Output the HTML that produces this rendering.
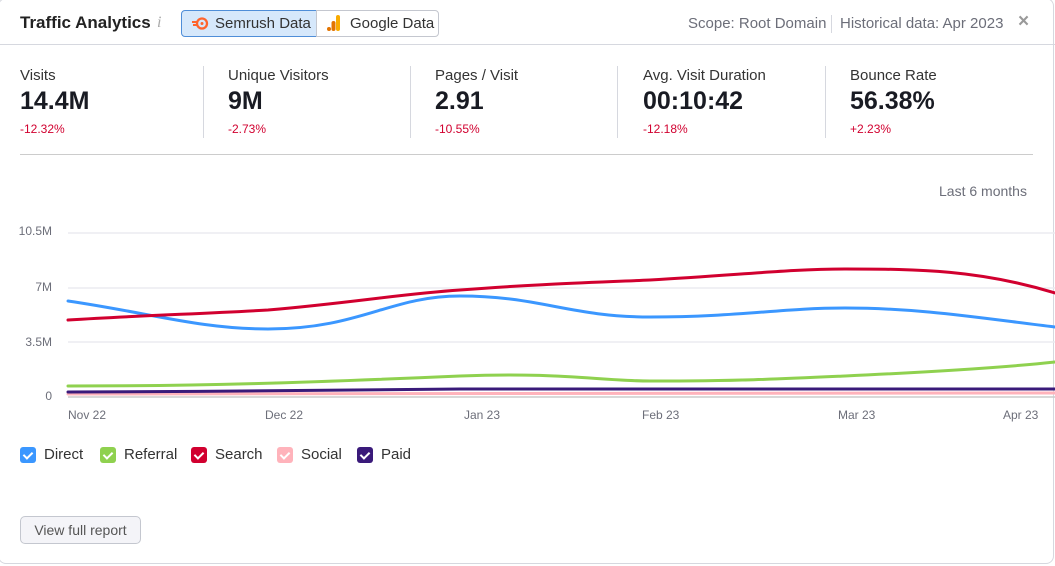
<!DOCTYPE html>
<html><head><meta charset="utf-8"><style>
*{box-sizing:border-box;margin:0;padding:0}
body{width:1055px;height:566px;background:#fff;font-family:"Liberation Sans",sans-serif;color:#333;position:relative;overflow:hidden}
.card{position:absolute;left:-2px;top:-2px;width:1056px;height:566px;border:1px solid #d6d8df;border-radius:8px;background:#fff}
.abs{position:absolute;white-space:nowrap}
.title{left:20px;top:13px;font-size:17px;font-weight:bold;color:#222}
.info{left:157px;top:14px;font-size:16px;color:#aaa;font-style:italic;font-family:"Liberation Serif",serif}
.tog{top:10px;height:27px;border:1px solid #c4c7cf;font-size:15px;color:#333;line-height:25px;padding-left:33px}
.hdr{top:15px;font-size:15px;color:#6c6e79}
.sep{position:absolute;background:#d6d8df}
.lab{font-size:15px;color:#333;top:67px}
.val{font-size:25px;font-weight:bold;color:#191b23;top:87px}
.pct{font-size:12px;color:#d1002f;top:122px}
.ax{font-size:12px;color:#6c6e79}
.leg{top:446px;font-size:15px;color:#333;padding-left:24px;line-height:18px}
.cb{position:absolute;left:0;top:1px;width:16px;height:16px;border-radius:3px}
.cb:after{content:"";position:absolute;left:5px;top:3px;width:4px;height:7px;border:solid #fff;border-width:0 2px 2px 0;transform:rotate(45deg)}
.btn{left:20px;top:516px;width:121px;height:28px;border:1px solid #c4c7cf;border-radius:5px;background:#f4f4f8;font-size:14px;color:#555;text-align:center;line-height:26px}
</style></head><body>
<div class="card"></div>
<div class="abs title">Traffic Analytics</div>
<div class="abs info">i</div>
<div class="abs tog" style="left:181px;width:136px;background:#d6e8fb;border-color:#4f8ed8;border-radius:4px 0 0 4px;line-height:26px">Semrush Data
<svg style="position:absolute;left:9px;top:6px" width="18" height="13" viewBox="0 0 18 13"><path d="M1 5h6M2 8h5" stroke="#ff642d" stroke-width="2"/><circle cx="11" cy="6.5" r="5" fill="none" stroke="#ff642d" stroke-width="2.3"/><circle cx="11" cy="6.5" r="1.5" fill="#ff642d"/></svg></div>
<div class="abs tog" style="left:316px;width:123px;border-radius:0 4px 4px 0">Google Data
<svg style="position:absolute;left:10px;top:4px" width="14" height="16" viewBox="0 0 14 16"><rect x="9" y="0" width="4" height="16" rx="2" fill="#f9ab00"/><rect x="4.5" y="6" width="4" height="10" rx="2" fill="#e37400"/><circle cx="2" cy="14" r="2" fill="#e37400"/></svg></div>
<div class="abs hdr" style="left:688px">Scope: Root Domain</div>
<div class="sep" style="left:831px;top:15px;width:1px;height:18px"></div>
<div class="abs hdr" style="left:840px">Historical data: Apr 2023</div>
<div class="abs" style="left:1018px;top:11px;font-size:19px;color:#999;font-weight:bold">×</div>
<div class="sep" style="left:0;top:44px;width:1055px;height:1px"></div>

<div class="abs lab" style="left:20px">Visits</div><div class="abs val" style="left:20px">14.4M</div><div class="abs pct" style="left:20px">-12.32%</div>
<div class="sep" style="left:203px;top:66px;width:1px;height:72px"></div>
<div class="abs lab" style="left:228px">Unique Visitors</div><div class="abs val" style="left:228px">9M</div><div class="abs pct" style="left:228px">-2.73%</div>
<div class="sep" style="left:410px;top:66px;width:1px;height:72px"></div>
<div class="abs lab" style="left:435px">Pages / Visit</div><div class="abs val" style="left:435px">2.91</div><div class="abs pct" style="left:435px">-10.55%</div>
<div class="sep" style="left:617px;top:66px;width:1px;height:72px"></div>
<div class="abs lab" style="left:643px">Avg. Visit Duration</div><div class="abs val" style="left:643px">00:10:42</div><div class="abs pct" style="left:643px">-12.18%</div>
<div class="sep" style="left:825px;top:66px;width:1px;height:72px"></div>
<div class="abs lab" style="left:850px">Bounce Rate</div><div class="abs val" style="left:850px">56.38%</div><div class="abs pct" style="left:850px">+2.23%</div>
<div class="sep" style="left:20px;top:154px;width:1013px;height:1px;background:#ccc"></div>

<div class="abs" style="left:939px;top:183px;font-size:14px;color:#6c6e79">Last 6 months</div>
<div class="abs ax" style="right:1003px;top:224px">10.5M</div>
<div class="abs ax" style="right:1003px;top:280px">7M</div>
<div class="abs ax" style="right:1003px;top:335px">3.5M</div>
<div class="abs ax" style="right:1003px;top:389px">0</div>
<svg class="abs" style="left:0;top:0" width="1055" height="566">
<g stroke="#ececf0" stroke-width="1.5"><path d="M68 233H1055M68 288H1055M68 342H1055"/></g>
<path d="M68 397H1055" stroke="#ccc" stroke-width="1.5"/>
<g fill="none" stroke-width="3" stroke-linecap="round">
<path d="M68 394 C300 394 600 393 1055 393" stroke="#ffb3bb"/>
<path d="M68 386 C200 386 300 383 460 376 C560 372 600 381 650 381 C740 381 780 379 845 376 C930 372 1000 368 1055 362" stroke="#8fd14f"/>
<path d="M68 392 C200 392 300 390 460 389 C700 389 900 388 1055 389" stroke="#3a1a7a"/>
<path d="M68 301 C150 313 200 329 268 329 C360 329 390 296 460 296 C540 296 570 317 650 317 C740 317 780 308 845 308 C920 308 980 318 1055 327" stroke="#3b97ff"/>
<path d="M68 320 C150 315 200 314 268 310 C350 303 400 294 460 290 C540 284 580 283 650 280 C740 275 790 269 845 269 C920 269 980 270 1055 293" stroke="#d1002f"/>
</g></svg>
<div class="abs ax" style="left:68px;top:408px">Nov 22</div>
<div class="abs ax" style="left:265px;top:408px">Dec 22</div>
<div class="abs ax" style="left:464px;top:408px">Jan 23</div>
<div class="abs ax" style="left:642px;top:408px">Feb 23</div>
<div class="abs ax" style="left:838px;top:408px">Mar 23</div>
<div class="abs ax" style="left:1003px;top:408px">Apr 23</div>

<div class="abs leg" style="left:20px"><span class="cb" style="background:#3b97ff"></span>Direct</div>
<div class="abs leg" style="left:100px"><span class="cb" style="background:#8fd14f"></span>Referral</div>
<div class="abs leg" style="left:191px"><span class="cb" style="background:#d1002f"></span>Search</div>
<div class="abs leg" style="left:277px"><span class="cb" style="background:#ffb3bb"></span>Social</div>
<div class="abs leg" style="left:357px"><span class="cb" style="background:#3a1a7a"></span>Paid</div>
<div class="abs btn">View full report</div>
</body></html>
